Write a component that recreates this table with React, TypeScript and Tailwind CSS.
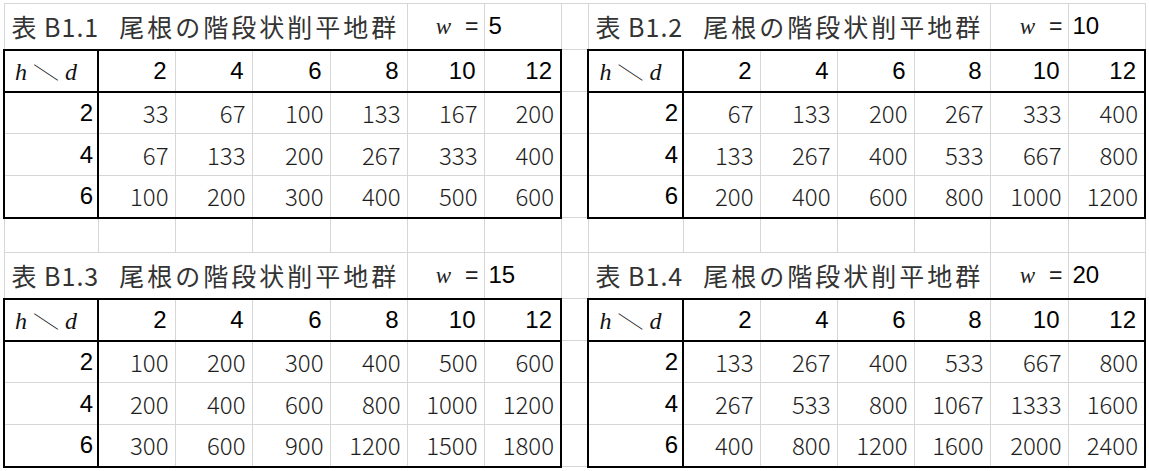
import React from 'react'
import clsx from 'clsx'

type Block = { no: string; w: number }

const top: [Block, Block] = [
    { no: 'B1.1', w: 5 },
    { no: 'B1.2', w: 10 },
]
const bottom: [Block, Block] = [
    { no: 'B1.3', w: 15 },
    { no: 'B1.4', w: 20 },
]

const D = [2, 4, 6, 8, 10, 12]
const H = [2, 4, 6]

const jp = "font-['Noto_Sans_CJK_JP',sans-serif]"
const sans = "font-['Liberation_Sans',Arial,sans-serif]"
const serif = "font-['Liberation_Serif','Times_New_Roman',serif]"

const grid = 'border border-[#d6d6d6] p-0'

// one cell of a boxed table (c = column inside block 0..6, r = 0 header, 1..3 data)
const boxCell = (c: number, r: number) =>
    clsx(
        grid,
        c === 0 && 'border-l-2 border-l-black',
        (c === 0 || c === 6) && 'border-r-2 border-r-black',
        r === 0 && 'border-t-2 border-t-black',
        (r === 0 || r === 3) && 'border-b-2 border-b-black',
    )

const TitleCells: React.FC<{ b: Block }> = ({ b }) => (
    <>
        <td colSpan={5} className={clsx(grid, jp, 'pl-[7px] text-left text-[25px] text-[#333] whitespace-nowrap')}>
            <span className="tracking-[1px]">表 {b.no}</span>
            <span className="ml-[20px] tracking-[3px]">尾根の階段状削平地群</span>
        </td>
        <td className={clsx(grid, 'pr-[5px] text-right text-[23px] text-[#222]')}>
            <span className={clsx(serif, 'italic')}>w</span>
            <span className={clsx(sans, 'ml-[14px]')}>=</span>
        </td>
        <td className={clsx(grid, sans, 'pl-[4px] text-left text-[24px] text-black')}>{b.w}</td>
    </>
)

const HeaderCells: React.FC = () => (
    <>
        <td className={clsx(boxCell(0, 0), 'pr-[10px] text-center text-[24px] text-[#111]')}>
            <span className={clsx(serif, 'italic')}>h</span>
            <span className={clsx(jp, 'mx-[7px] inline-block translate-y-[2px] scale-y-[0.62] text-[24px] font-light')}>╲</span>
            <span className={clsx(serif, 'italic')}>d</span>
        </td>
        {D.map((d, i) => (
            <td key={d} className={clsx(boxCell(i + 1, 0), sans, 'pr-[8px] text-right text-[24px] text-black')}>
                {d}
            </td>
        ))}
    </>
)

const DataCells: React.FC<{ w: number; h: number; r: number }> = ({ w, h, r }) => (
    <>
        <td className={clsx(boxCell(0, r), sans, 'pr-[4px] text-right text-[24px] text-black')}>{h}</td>
        {D.map((d, i) => (
            <td key={d} className={clsx(boxCell(i + 1, r), jp, 'pr-[6px] text-right text-[24px] font-light text-[#1e1e1e]')}>
                {Math.round((h * d * w * 5) / 3)}
            </td>
        ))}
    </>
)

const Gap: React.FC = () => <td className={grid} />

const Section: React.FC<{ pair: [Block, Block] }> = ({ pair }) => (
    <>
        <tr className="h-[46px]">
            <TitleCells b={pair[0]} />
            <Gap />
            <TitleCells b={pair[1]} />
        </tr>
        <tr className="h-[42px]">
            <HeaderCells />
            <Gap />
            <HeaderCells />
        </tr>
        {H.map((h, i) => (
            <tr key={h} className="h-[42px]">
                <DataCells w={pair[0].w} h={h} r={i + 1} />
                <Gap />
                <DataCells w={pair[1].w} h={h} r={i + 1} />
            </tr>
        ))}
    </>
)

export default function App() {
    return (
        <div className="h-[471px] w-[1149px] overflow-hidden bg-white pl-[3px] pt-[3px]">
            <table className="table-fixed border-collapse leading-none">
                <colgroup>
                    <col className="w-[94px]" />
                    <col className="w-[77px]" />
                    <col className="w-[77px]" />
                    <col className="w-[78px]" />
                    <col className="w-[77px]" />
                    <col className="w-[77px]" />
                    <col className="w-[77px]" />
                    <col className="w-[27px]" />
                    <col className="w-[95px]" />
                    <col className="w-[77px]" />
                    <col className="w-[77px]" />
                    <col className="w-[77px]" />
                    <col className="w-[76px]" />
                    <col className="w-[78px]" />
                    <col className="w-[77px]" />
                </colgroup>
                <tbody>
                    <Section pair={top} />
                    <tr className="h-[35px]">
                        {Array.from({ length: 15 }, (_, i) => (
                            <td key={i} className={grid} />
                        ))}
                    </tr>
                    <Section pair={bottom} />
                </tbody>
            </table>
        </div>
    )
}
